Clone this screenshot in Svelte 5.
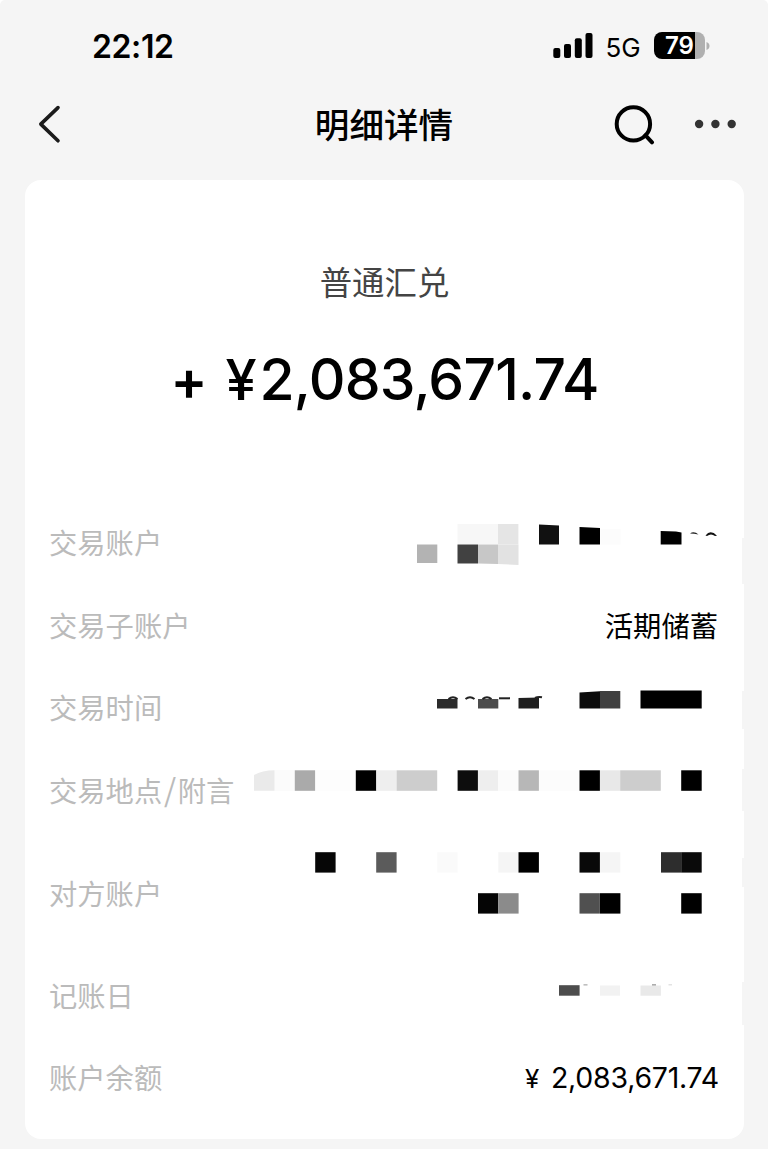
<script>
  // Mosaic tiles: [x, y, width, height, colour]
  const rows = [
    {
      label: ['交易账户'], top: 502, height: 82,
      tiles: [
        [417, 544.5, 20.3, 18.5, '#b3b3b3'],
        [457.5, 524, 40.6, 20.4, '#f7f7f7'], [498, 524, 20.4, 20.4, '#e5e5e5'],
        [600.5, 529, 20, 15.5, '#fcfcfc'],
        [742, 538, 2, 46, '#f5f5f5']
      ],
      shapes: [
        ['M457.5 544.5H478V563.5H457.5Z', '#414141'],
        ['M478 544.5H498V564L478 563.5Z', '#c7c7c7'],
        ['M498 544.5H518.5V565L498 564Z', '#e2e2e2'],
        ['M539 524.5L559 525.5V544.5H539Z', '#111'],
        ['M579.5 527L600 528V544.5H579.5Z', '#000'],
        ['M660.7 531L676 531.5L681.5 532.5V544.5H660.7Z', '#000'],
        ['M690 533.5Q694 530.5 698.5 534.5Q694 533.5 690 533.5Z', '#222'],
        ['M705.5 535.5Q710.5 529 717 535.8L715 536Q711 532.8 707 536Z', '#111']
      ]
    },
    { label: ['交易子账户'], top: 584, height: 83, value: '活期储蓄' },
    {
      label: ['交易时间'], top: 667, height: 82,
      tiles: [
        [437, 699, 20.5, 9.5, '#2b2b2b'], [478, 699, 20.3, 9.5, '#4c4c4c'],
        [600, 691, 20.3, 17.5, '#404040'],
        [640.5, 690.5, 61.2, 18, '#000'],
        [742, 691, 2, 38, '#f5f5f5']
      ],
      shapes: [
        ['M518.5 698L539 697.5V708.5H518.5Z', '#1f1f1f'],
        ['M579.5 692.5L600 691.3V708.5H579.5Z', '#0c0c0c']
      ],
      strokes: ['M448.5 699Q453 695.5 457.5 699', 'M465.5 699Q470 695.5 474.5 699', 'M482.5 699Q487 695.5 491.5 699', 'M499 698.3H510', 'M535 698Q538 696.5 542 697.3']
    },
    {
      label: ['交易地点', '附言'], top: 749, height: 83,
      tiles: [
        [274.5, 770, 20.3, 21, '#fbfbfb'], [294.8, 770.3, 20.5, 20.5, '#aaa'],
        [315.3, 770, 40, 21, '#fdfdfd'],
        [355.8, 770.3, 20.5, 20.5, '#000'], [376.3, 770.3, 20.3, 20.5, '#eee'],
        [396.6, 770.3, 40.6, 20.5, '#cdcdcd'],
        [457.6, 770.3, 20.3, 20.5, '#0d0d0d'], [478, 770.3, 20.3, 20.5, '#eee'],
        [498.3, 770.3, 20.2, 20.5, '#fbfbfb'], [518.5, 770.3, 20.4, 20.5, '#b7b7b7'],
        [539, 770.3, 40.4, 20.5, '#fcfcfc'],
        [579.5, 770.3, 20.4, 20.5, '#000'], [600, 770.3, 20.3, 20.5, '#e8e8e8'],
        [620.2, 770.3, 40.6, 20.5, '#cdcdcd'], [681.2, 770.3, 20.5, 20.5, '#000'],
        [742, 769, 2, 42, '#f5f5f5']
      ],
      shapes: [['M254 775Q262 770.5 274.5 770.3V790.8H254Z', '#eaeaea']]
    },
    {
      label: ['对方账户'], top: 832, height: 123,
      tiles: [
        [315.2, 852.2, 20.4, 20.4, '#060606'], [376.2, 852.2, 20.4, 20.4, '#5b5b5b'],
        [437.3, 852.2, 20.3, 20.4, '#fafafa'], [498.3, 852.2, 20.2, 20.4, '#f5f5f5'],
        [518.5, 852.2, 20.4, 20.4, '#000'], [579.5, 852.2, 20.4, 20.4, '#090909'],
        [600, 852.2, 20.3, 20.4, '#f5f5f5'], [661, 852.2, 20.2, 20.4, '#2d2d2d'],
        [681.2, 852.2, 20.5, 20.4, '#0a0a0a'],
        [478, 893.2, 20.3, 20.4, '#050505'], [498.3, 893.2, 20.3, 20.4, '#8b8b8b'],
        [579.5, 893.2, 20.4, 20.4, '#505050'], [600, 893.2, 20.4, 20.4, '#000'],
        [681.2, 893.2, 20.5, 20.4, '#000'],
        [742, 858, 2, 29, '#f5f5f5']
      ]
    },
    {
      label: ['记账日'], top: 955, height: 82,
      tiles: [
        [559, 985.2, 20.6, 10.5, '#4d4d4d'], [600, 985.5, 20, 10.2, '#f2f2f2'],
        [640.5, 985.5, 20.4, 10.2, '#e9e9e9'],
        [583.5, 984.2, 4, 1.3, '#b0b0b0'], [652, 984.2, 4, 1.3, '#999'],
        [668.5, 984.2, 3.5, 1.2, '#ddd'],
        [742, 982, 2, 43, '#f5f5f5']
      ]
    },
    { label: ['账户余额'], top: 1037, height: 82, value: '2,083,671.74', numeric: true }
  ];
</script>

<main class="screen">
  <div class="status">
    <span class="time">22:12</span>
    <div class="indicators">
      <svg class="signal" width="40" height="26" viewBox="0 0 40 26">
        <rect x="0.3" y="15" width="7" height="10" rx="2" />
        <rect x="11" y="11" width="7" height="14" rx="2" />
        <rect x="21.8" y="5.2" width="7" height="19.8" rx="2" />
        <rect x="32.5" y="0" width="7" height="25" rx="2" />
      </svg>
      <span class="network">5G</span>
      <div class="battery"><span>79</span></div>
      <svg class="tip" width="4" height="10" viewBox="0 0 4 10"><path d="M0.5 1Q3.5 2.2 3.5 5T0.5 9Z" fill="#b0b0b0" /></svg>
    </div>
  </div>

  <header>
    <svg width="26" height="42" viewBox="36 103 26 42" fill="none" stroke="#1b1b1b" stroke-width="3.6" stroke-linecap="round" stroke-linejoin="round">
      <path d="M58 107.6L40.8 124.1L58 140.8" />
    </svg>
    <h1>明细详情</h1>
    <div class="actions">
      <svg width="42" height="42" viewBox="614 104 42 42" fill="none" stroke="#000" stroke-width="4" stroke-linecap="round">
        <circle cx="633.4" cy="124.9" r="16.7" />
        <path d="M645.5 136.3L652 143.3" />
      </svg>
      <svg width="42" height="10" viewBox="694 119 42 10" fill="#333">
        <circle cx="699.1" cy="124" r="4.2" /><circle cx="715.4" cy="124" r="4.2" /><circle cx="731.7" cy="124" r="4.2" />
      </svg>
    </div>
  </header>

  <section class="card">
    <div class="summary">
      <p class="kind">普通汇兑</p>
      <p class="amount"><span class="sign">+</span><span class="yen">¥</span><span class="digits">2,083,671.74</span></p>
    </div>
    <div class="details">
      {#each rows as row}
        <div class="row" style="height: {row.height}px">
          <span class="label">{row.label[0]}{#if row.label[1]}<span class="slash">/</span>{row.label[1]}{/if}</span>
          {#if row.value}
            <span class="value" class:numeric={row.numeric}>{#if row.numeric}<span class="currency">¥</span>{/if}{row.value}</span>
          {:else}
            <svg width="504" height={row.height} viewBox="240 {row.top} 504 {row.height}">
              {#each row.tiles as [x, y, w, h, fill]}
                <rect {x} {y} width={w} height={h} {fill} />
              {/each}
              {#each row.shapes ?? [] as [d, fill]}
                <path {d} {fill} />
              {/each}
              {#each row.strokes ?? [] as d}
                <path {d} fill="none" stroke="#222" stroke-width="2" />
              {/each}
            </svg>
          {/if}
        </div>
      {/each}
    </div>
  </section>
</main>

<style>
  :global(body) { background: #fff; }
  .screen {
    box-sizing: border-box;
    width: 768px;
    height: 1149px;
    overflow: hidden;
    background: #f5f5f5;
    border-radius: 5px 5px 0 0;
    color: #000;
    font-family: Inter, "Noto Sans CJK SC", sans-serif;
  }
  svg { display: block; flex: none; }
  .status {
    box-sizing: border-box;
    height: 90px;
    padding: 4px 58px 0 92px;
    display: flex;
    align-items: center;
    justify-content: space-between;
  }
  .time { font-size: 32px; line-height: 40px; font-weight: 600; letter-spacing: -0.4px; }
  .indicators { display: flex; align-items: center; }
  .signal { margin-bottom: 2px; }
  .network { width: 35px; margin: 0 13.5px 0 12.5px; padding-top: 1px; font-size: 26px; line-height: 32px; white-space: nowrap; }
  .battery {
    width: 51px;
    height: 27px;
    margin-bottom: 3px;
    border-radius: 8px;
    background: linear-gradient(90deg, #000 0 40.5px, #b0b0b0 40.5px);
    color: #fff;
    font-size: 24px;
    line-height: 28px;
    font-weight: 600;
    text-align: center;
  }
  .tip { margin: 0 0 2px 1px; }
  header {
    box-sizing: border-box;
    height: 90px;
    padding: 0 32px 22px 36px;
    display: grid;
    grid-template-columns: 122px 1fr 122px;
    align-items: center;
  }
  h1 { margin: 0; padding: 2px 4px 0 0; text-align: center; font-size: 34.6px; line-height: 48px; font-weight: 500; }
  .actions { display: flex; align-items: center; justify-content: space-between; }
  .card {
    width: 719px;
    height: 959px;
    margin-left: 25px;
    border-radius: 16px;
    background: #fff;
  }
  .summary {
    box-sizing: border-box;
    height: 322px;
    padding-top: 80px;
    display: flex;
    flex-direction: column;
    align-items: center;
  }
  p { margin: 0; }
  .kind { font-size: 32.4px; line-height: 48px; color: #444; }
  .amount { display: flex; align-items: baseline; margin-top: 37px; font-size: 57px; line-height: 70px; font-weight: 500; white-space: nowrap; }
  .sign { width: 55px; font-size: 55px; font-weight: 600; line-height: 60px; }
  .yen { width: 34px; font-size: 56px; font-weight: 550; }
  .digits { letter-spacing: -0.8px; }
  .row { display: flex; align-items: center; justify-content: space-between; padding-left: 24px; }
  .label { padding-top: 2px; font-size: 28.3px; line-height: 40px; font-weight: 400; color: #bbb; white-space: nowrap; }
  .slash { display: inline-block; width: 15.5px; text-align: center; font-family: "Noto Sans CJK SC", sans-serif; font-size: 31px; line-height: 30px; font-weight: 400; }
  .value { padding: 2px 26px 0 0; font-size: 28.3px; line-height: 40px; white-space: nowrap; }
  .value.numeric { padding: 1px 25px 0 0; font-size: 28.5px; letter-spacing: -0.25px; }
  .currency { display: inline-block; width: 26px; font-size: 26px; }
</style>
